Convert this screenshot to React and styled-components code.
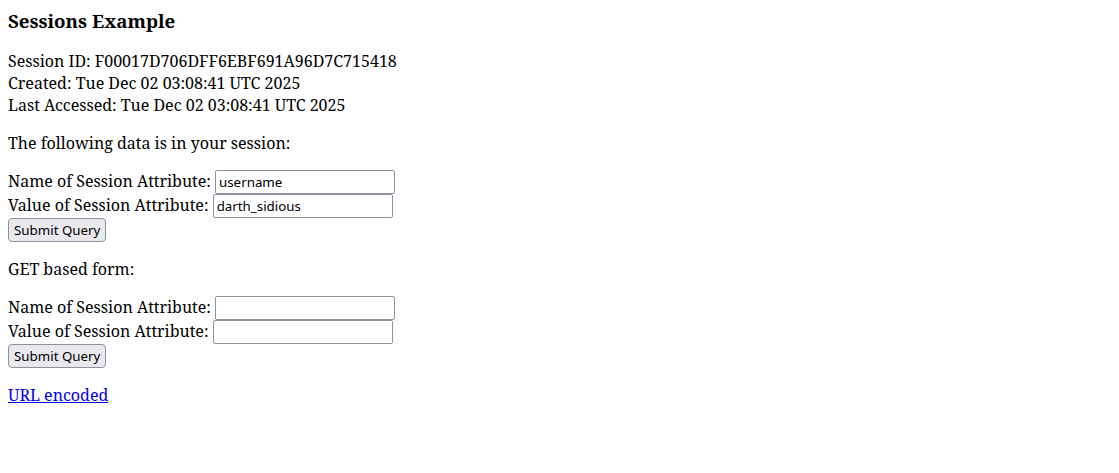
import React from 'react';
import styled, { createGlobalStyle } from 'styled-components';

const GlobalStyle = createGlobalStyle`
    body {
        margin: 8px;
        font-family: "Noto Serif", serif;
        font-size: 16px;
        color: #000;
        background: #fff;
    }
`;

const Title = styled.h3`
    font-size: 18.72px;
    font-weight: bold;
    margin: 0 0 17px;
`;

const Para = styled.p`
    margin: 16px 0;
`;

const Form = styled.form`
    margin: 0 0 16px;
`;

const TextField = styled.input`
    box-sizing: border-box;
    width: 180px;
    height: 24px;
    padding: 0 3px;
    border: 1px solid #8f8f9d;
    border-radius: 2px;
    background: #fff;
    color: #000;
    font-family: "Noto Sans", sans-serif;
    font-size: 13.333px;
    vertical-align: baseline;
`;

const SubmitButton = styled.input`
    box-sizing: border-box;
    height: 24px;
    padding: 0 5px;
    border: 1px solid #8f8f9d;
    border-radius: 4px;
    background: #e9e9ed;
    color: #000;
    font-family: "Noto Sans", sans-serif;
    font-size: 13.333px;
`;

const EncodedLink = styled.a`
    color: #0000ee;
    text-decoration: underline;
`;

const SessionForm = ({ method, name, value }) => (
    <Form action="SessionExample" method={method} onSubmit={(e) => e.preventDefault()}>
        Name of Session Attribute: <TextField type="text" size={20} name="dataname" defaultValue={name} />
        <br />
        Value of Session Attribute: <TextField type="text" size={20} name="datavalue" defaultValue={value} />
        <br />
        <SubmitButton type="submit" value="Submit Query" />
    </Form>
);

const App = () => (
    <>
        <GlobalStyle />
        <Title>Sessions Example</Title>
        Session ID: F00017D706DFF6EBF691A96D7C715418
        <br />
        Created: Tue Dec 02 03:08:41 UTC 2025
        <br />
        Last Accessed: Tue Dec 02 03:08:41 UTC 2025
        <br />
        <Para>The following data is in your session:</Para>
        <SessionForm method="POST" name="username" value="darth_sidious" />
        <Para>GET based form:</Para>
        <SessionForm method="GET" />
        <Para>
            <EncodedLink href="#">URL encoded</EncodedLink>
        </Para>
    </>
);

export default App;
